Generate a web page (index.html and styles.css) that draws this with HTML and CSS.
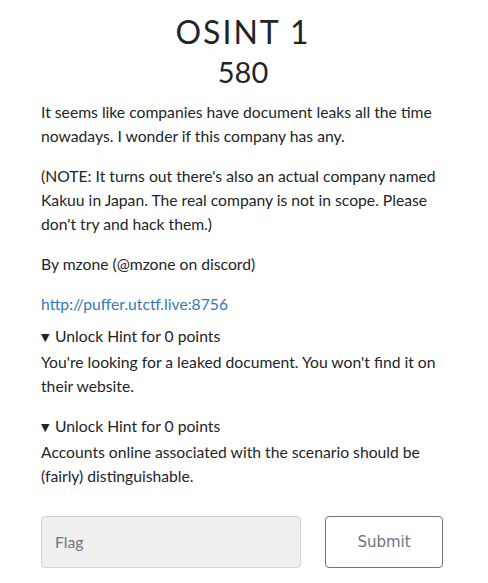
FILE: index.html
```html
<!DOCTYPE html>
<html>
<head>
<meta charset="utf-8">
<link rel="stylesheet" href="styles.css">
</head>
<body>
<div class="modal">
  <h1 class="title">OSINT 1</h1>
  <h2 class="value">580</h2>
  <div class="desc">
    <p>It seems like companies have document leaks all the time nowadays. I wonder if this company has any.</p>
    <p>(NOTE: It turns out there's also an actual company named Kakuu in Japan. The real company is not in scope. Please don't try and hack them.)</p>
    <p>By mzone (@mzone on discord)</p>
    <p class="linkp"><a href="#">http://puffer.utctf.live:8756</a></p>
  </div>
  <details class="hint" open>
    <summary>Unlock Hint for 0 points</summary>
    <p>You're looking for a leaked document. You won't find it on their website.</p>
  </details>
  <details class="hint" open>
    <summary>Unlock Hint for 0 points</summary>
    <p>Accounts online associated with the scenario should be (fairly) distinguishable.</p>
  </details>
  <div class="submit-row">
    <input class="flag" type="text" placeholder="Flag">
    <button class="btn">Submit</button>
  </div>
</div>
</body>
</html>
```
FILE: styles.css
```css
html, body {
  margin: 0;
  padding: 0;
  background: #ffffff;
}
body {
  font-family: Lato, "Noto Sans", sans-serif;
  font-size: 15.7px;
  line-height: 24px;
  color: #212529;
}
.modal {
  width: 404px;
  margin-left: 41px;
  padding-top: 12px;
}
.title {
  margin: 0;
  text-align: center;
  font-weight: 400;
  font-size: 32px;
  line-height: 40px;
  letter-spacing: 2px;
}
.value {
  margin: 2px 0 10px 0;
  text-align: center;
  font-weight: 400;
  font-size: 29px;
  line-height: 36px;
}
.desc p {
  margin: 0 0 16px 0;
}
.desc p.linkp {
  margin-bottom: 8px;
}
a {
  color: #337ab7;
  text-decoration: none;
}
.hint {
  margin-bottom: 16px;
}
.hint summary {
  cursor: pointer;
  list-style: none;
  display: block;
}
.hint summary::-webkit-details-marker {
  display: none;
}
.hint summary::before {
  content: "\25BC";
  font-family: "DejaVu Sans", sans-serif;
  font-size: 11px;
  display: inline-block;
  width: 14px;
  vertical-align: 1px;
}
.hint p {
  margin: 0;
}
.submit-row {
  display: grid;
  grid-template-columns: 260px 118px;
  column-gap: 24px;
  margin-top: 28px;
}
.flag {
  box-sizing: border-box;
  height: 52px;
  padding: 0 13px;
  font-family: Lato, sans-serif;
  font-size: 15.7px;
  color: #495057;
  background: #efefef;
  border: 1px solid #ced4da;
  border-radius: 4px;
  outline: none;
}
.flag::placeholder {
  color: #6c757d;
}
.btn {
  box-sizing: border-box;
  height: 52px;
  font-family: "DejaVu Sans", sans-serif;
  font-size: 15px;
  color: #6c757d;
  background: #ffffff;
  border: 1px solid #6c757d;
  border-radius: 4px;
}
```
